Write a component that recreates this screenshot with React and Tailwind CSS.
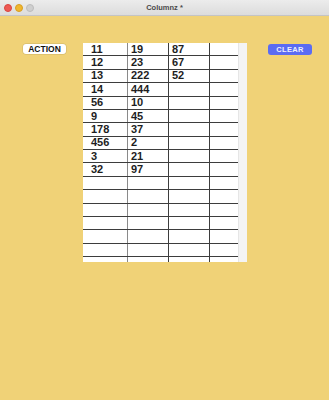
import React from "react";

const col1 = ["11", "12", "13", "14", "56", "9", "178", "456", "3", "32"];
const col2 = ["19", "23", "222", "444", "10", "45", "37", "2", "21", "97"];
const col3 = ["87", "67", "52"];

export default function App() {
  const rows = Array.from({ length: 16 }, (_, i) => i);
  return (
    <div className="w-[329px] h-[400px] bg-[#f0d277] flex flex-col font-['Liberation_Sans',Arial,sans-serif] overflow-hidden">
      <div className="h-[16px] shrink-0 grid grid-cols-[1fr_auto_1fr] items-center bg-gradient-to-b from-[#ececec] to-[#dcdcdc] border-b border-[#c4c4c4]">
        <div className="flex items-center gap-[3px] pl-[3.5px]">
          <span className="w-[8px] h-[8px] rounded-full bg-[#ee5a55] border border-[#d9463f]" />
          <span className="w-[8px] h-[8px] rounded-full bg-[#f0b72f] border border-[#d89e22]" />
          <span className="w-[8px] h-[8px] rounded-full bg-[#cfcfcf] border border-[#bcbcbc]" />
        </div>
        <div className="text-[7.5px] font-bold text-[#4a4a4a] leading-none">Columnz *</div>
        <div />
      </div>
      <div className="flex items-start pt-[27px]">
        <button className="ml-[23px] mt-[1px] w-[43px] h-[10px] rounded-[3px] bg-white flex items-center justify-center text-[8.5px] font-bold text-[#111] leading-none shadow-[0_0_0_0.5px_rgba(0,0,0,0.15)]">
          ACTION
        </button>
        <div className="ml-[17px] w-[164px] h-[219px] bg-white flex">
          <div className="w-[155px] flex flex-col">
            {rows.map((i) => (
              <div key={i} className="h-[13.375px] shrink-0 grid grid-cols-[45px_41px_41px_28px] border-b border-[#3d3d3d]">
                <div className="border-r border-[#8a8a8a] pl-[8px] flex items-center text-[11px] font-bold text-[#1e1e1e] leading-none">
                  {col1[i] || ""}
                </div>
                <div className="border-r border-[#3d3d3d] pl-[3px] flex items-center text-[11px] font-bold text-[#1e1e1e] leading-none">
                  {col2[i] || ""}
                </div>
                <div className="border-r border-[#3d3d3d] pl-[3px] flex items-center text-[11px] font-bold text-[#1e1e1e] leading-none">
                  {col3[i] || ""}
                </div>
                <div />
              </div>
            ))}
            <div className="flex-1 grid grid-cols-[45px_41px_41px_28px]">
              <div className="border-r border-[#8a8a8a]" />
              <div className="border-r border-[#3d3d3d]" />
              <div className="border-r border-[#3d3d3d]" />
              <div />
            </div>
          </div>
          <div className="w-[9px] bg-[#f4f4f4] border-l border-[#e6e6e6]" />
        </div>
        <button className="ml-[21px] mt-[1px] w-[44px] h-[11px] rounded-[3px] bg-[#5b6cf3] flex items-center justify-center text-[7.5px] font-bold tracking-[0.3px] text-[#eef0ff] leading-none">
          CLEAR
        </button>
      </div>
    </div>
  );
}
